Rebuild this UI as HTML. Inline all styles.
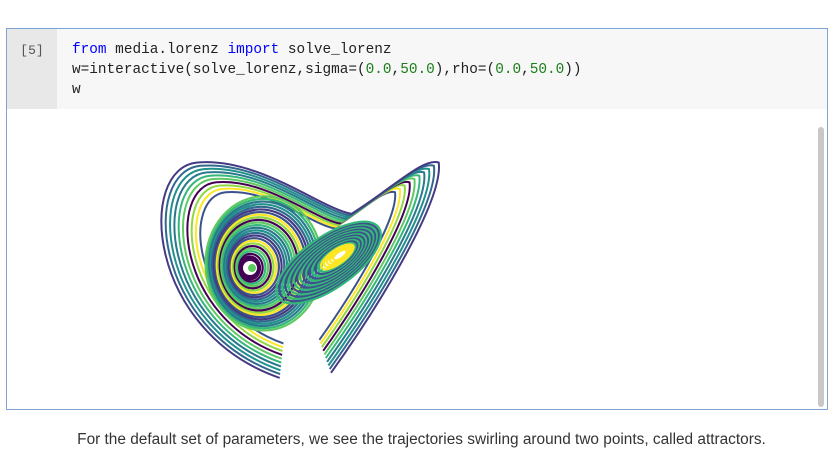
<!DOCTYPE html>
<html><head><meta charset="utf-8"><style>
body{margin:0;width:835px;height:462px;background:#fff;overflow:hidden;font-family:"Liberation Sans",sans-serif}
.cell{position:absolute;left:6px;top:28px;width:820px;height:380px;border:1.5px solid #7fa3d3}
.prompt{position:absolute;left:0;top:0;width:50px;height:80px;background:#e8e8e8;font:13px "Liberation Mono",monospace;color:#555;text-align:center;padding-top:14px;box-sizing:border-box}
.code{position:absolute;left:50px;top:0;right:0;height:80px;background:#f7f7f7;font:14.4px/20px "Liberation Mono",monospace;color:#222;padding:11px 0 0 15px;box-sizing:border-box;white-space:pre}
.k{color:#0000ff}.n{color:#1a7f1a}
.sb{position:absolute;left:811px;top:98px;width:6px;height:280px;background:#c8c8c8;border-radius:3px}
.cap{position:absolute;top:431px;left:0;width:843px;text-align:center;font-size:15.4px;color:#333}
svg{position:absolute;left:0;top:0}
</style></head><body>
<div class="cell">
<div class="prompt">[5]</div>
<div class="code"><span class="k">from</span> media.lorenz <span class="k">import</span> solve_lorenz
w=interactive(solve_lorenz,sigma=(<span class="n">0.0</span>,<span class="n">50.0</span>),rho=(<span class="n">0.0</span>,<span class="n">50.0</span>))
w</div>
<div class="sb"></div>
</div>
<svg id="s" width="835" height="462"></svg>
<div class="cap">For the default set of parameters, we see the trajectories swirling around two points, called attractors.</div>
<script>
var s=document.getElementById('s'),h='';
var cols=['#440154','#3b528b','#21918c','#5ec962','#fde725','#31688e','#35b779','#90d743','#443983','#2a788e'];
function c(i){return cols[i%cols.length]}
var base=[[280,375],[150,330],[140,170],[200,165],[260,160],[320,210],[350,215],[390,190],[420,160],[435,165],[440,200],[380,300],[330,370]];
for(var k=0;k<10;k++){var f=0.72+k*0.034,d='';
 base.forEach(function(p,i){var x=292+(p[0]-292)*f,y=262+(p[1]-262)*f;d+=(i==0?'M':(i%3==1?' C':' '))+x.toFixed(1)+' '+y.toFixed(1);});
 h+='<path d="'+d+'" fill="none" stroke="'+c(k*3+1)+'" stroke-width="2"/>';}
for(var i=0;i<24;i++){var r=10+i*2.1;h+='<ellipse cx="'+(250+i*0.6)+'" cy="'+(268-i*0.2)+'" rx="'+r+'" ry="'+(r*1.15)+'" fill="none" stroke="'+(i<2?'#440154':c(i*7+2))+'" stroke-width="2.2"/>';}
for(var i=0;i<20;i++){var r=8+i*2.8;h+='<ellipse cx="'+(340-i*0.6)+'" cy="'+(255+i*0.4)+'" rx="'+r+'" ry="'+(r*0.42)+'" transform="rotate(-35 '+(340-i*0.6)+' '+(255+i*0.4)+')" fill="none" stroke="'+(i<5?'#fde725':c(i*5+1))+'" stroke-width="2.2"/>';}
h+='<circle cx="250" cy="268" r="9" fill="#fff" stroke="#440154" stroke-width="4"/><circle cx="252" cy="268" r="4" fill="#5ec962"/>';
s.innerHTML=h;
</script>
</body></html>
